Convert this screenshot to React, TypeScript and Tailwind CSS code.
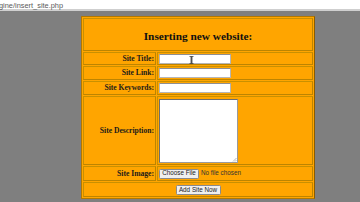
import React from "react";

const cell = "border border-[#bd8400] border-t-[#c99000] border-l-[#c99000] bg-[#ffa500]";
const label =
  cell +
  " flex items-center justify-end pr-[1px] text-[7.6px] font-bold text-[#1a1a1a] leading-none";
const inputCell = cell + " flex items-center pl-[1px]";

function TextBox() {
  return (
    <div className="w-[72px] h-[10px] bg-white border border-[#b5b5b5] border-t-[#8f8f8f]" />
  );
}

export default function App() {
  return (
    <div
      className="w-[360px] h-[202px] overflow-hidden bg-[#7f7f7f] relative"
      style={{ fontFamily: '"Liberation Serif", "Times New Roman", serif' }}
    >
      <div className="h-[11px] bg-white border-b-[2px] border-[#cfcfcf] flex items-center">
        <span
          className="text-[7.4px] leading-none text-[#5a5a5a] -ml-[1px] mt-[2px]"
          style={{ fontFamily: '"Liberation Sans", Arial, sans-serif' }}
        >
          gine/insert_site.php
        </span>
      </div>
      <div className="ml-[81px] mt-[5px] w-[234px] border border-[#b27800] border-r-[#8a5c00] bg-[#ffa500] p-[1px]">
        <div className="grid grid-cols-[73px_156px] grid-rows-[33px_13px_14px_14px_69px_15px_15px] gap-[1px]">
          <div
            className={
              cell +
              " col-span-2 flex items-center justify-center pt-[3px] text-[11.3px] font-bold text-[#111]"
            }
          >
            Inserting new website:
          </div>

          <div className={label}>Site Title:</div>
          <div className={inputCell + " relative"}>
            <TextBox />
            <svg
              className="absolute left-[31px] top-[3px]"
              width="5"
              height="8"
              viewBox="0 0 5 8"
            >
              <path
                d="M0.5 0.5h1.5v7h-1.5M4.5 0.5h-1.5v7h1.5M2 0.5h1M2 7.5h1M2.5 0.5v7"
                fill="none"
                stroke="#444"
                strokeWidth="0.8"
              />
            </svg>
          </div>

          <div className={label}>Site Link:</div>
          <div className={inputCell}>
            <TextBox />
          </div>

          <div className={label}>Site Keywords:</div>
          <div className={inputCell}>
            <TextBox />
          </div>

          <div className={label}>Site Description:</div>
          <div className={inputCell}>
            <div className="relative w-[79px] h-[64px] bg-white border border-[#6e6e6e] border-r-[#9a9a9a] border-b-[#9a9a9a]">
              <svg
                className="absolute right-[0px] bottom-[0px]"
                width="5"
                height="5"
                viewBox="0 0 5 5"
              >
                <path d="M1 4.5L4.5 1M3 4.5L4.5 3" stroke="#888" strokeWidth="0.6" />
              </svg>
            </div>
          </div>

          <div className={label}>Site Image:</div>
          <div className={inputCell + " gap-[2px]"} style={{ fontFamily: '"Liberation Sans", Arial, sans-serif' }}>
            <div className="h-[10px] w-[40px] bg-[#efefef] border border-[#8a8a8a] rounded-[1.5px] flex items-center justify-center text-[6.3px] leading-none text-[#222]">
              Choose File
            </div>
            <span className="text-[6.3px] leading-none text-[#333]">No file chosen</span>
          </div>

          <div
            className={cell + " col-span-2 flex items-center justify-center"}
            style={{ fontFamily: '"Liberation Sans", Arial, sans-serif' }}
          >
            <div className="h-[10px] w-[45px] bg-[#efefef] border border-[#8a8a8a] rounded-[1.5px] flex items-center justify-center text-[6.3px] leading-none text-[#222] mt-[1px]">
              Add Site Now
            </div>
          </div>
        </div>
      </div>
    </div>
  );
}
